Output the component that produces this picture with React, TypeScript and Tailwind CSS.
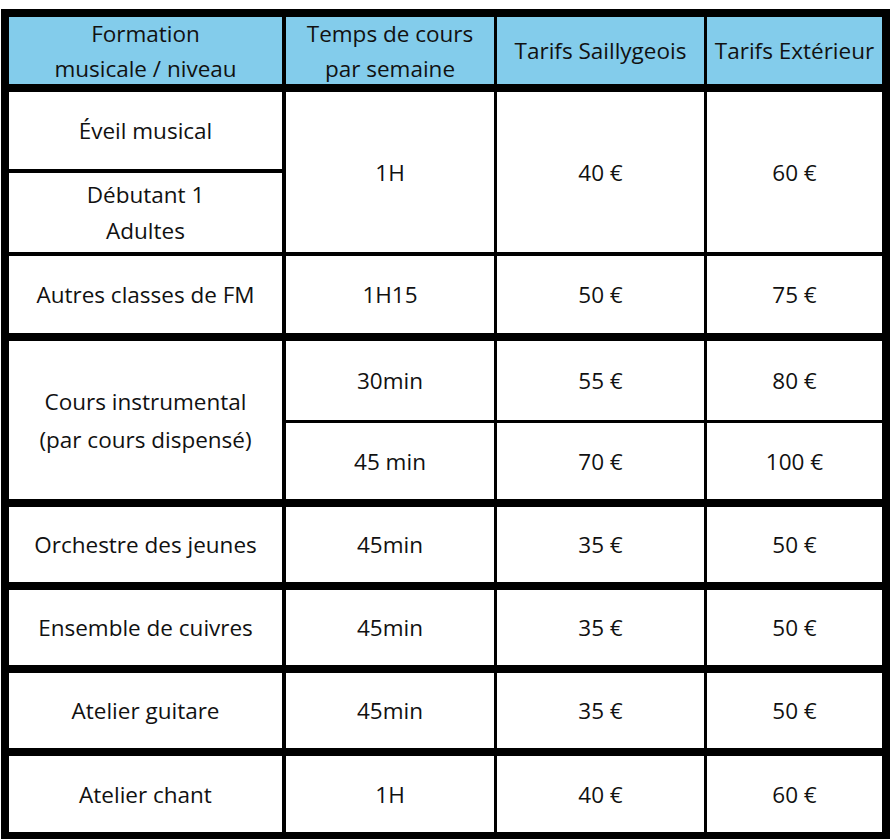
import type { ReactNode } from "react";

interface CellProps {
  children?: ReactNode;
  className?: string;
}

function Cell({ children, className = "" }: CellProps) {
  return (
    <div
      className={`flex flex-col items-center justify-center bg-white pt-px text-center ${className}`}
    >
      {children}
    </div>
  );
}

function Head({ children, className = "" }: CellProps) {
  return (
    <div
      className={`flex flex-col items-center justify-center bg-[#83cceb] text-center leading-[35px] ${className}`}
    >
      {children}
    </div>
  );
}

const groups = [
  { name: "Orchestre des jeunes", time: "45min", local: "35 €", ext: "50 €" },
  { name: "Ensemble de cuivres", time: "45min", local: "35 €", ext: "50 €" },
  { name: "Atelier guitare", time: "45min", local: "35 €", ext: "50 €" },
  { name: "Atelier chant", time: "1H", local: "40 €", ext: "60 €" },
];

export default function App() {
  return (
    <div className="min-h-[840px] bg-white pt-[9px] pl-px font-['Open_Sans',sans-serif] text-[22.5px] text-[#111]">
      <div className="grid w-[889px] grid-cols-[274px_208px_207px_175px] grid-rows-[67px_85px_83px_81px_87px_79px_83px_83px_83px_84px] gap-x-[3px] bg-black p-[8px] pb-[7px]">
        <Head className="mr-px">
          <span>Formation</span>
          <span>musicale / niveau</span>
        </Head>
        <Head>
          <span>Temps de cours</span>
          <span>par semaine</span>
        </Head>
        <Head>Tarifs Saillygeois</Head>
        <Head>Tarifs Extérieur</Head>

        {/* Éveil + Débutant share the same prices */}
        <Cell className="mr-px mt-[8px]">Éveil musical</Cell>
        <Cell className="row-span-2 mt-[8px]">1H</Cell>
        <Cell className="row-span-2 mt-[8px]">40 €</Cell>
        <Cell className="row-span-2 mt-[8px]">60 €</Cell>
        <Cell className="mr-px mt-[4px] leading-[36px]">
          <span>Débutant 1</span>
          <span>Adultes</span>
        </Cell>

        <Cell className="mr-px mt-[4px]">Autres classes de FM</Cell>
        <Cell className="mt-[4px]">1H15</Cell>
        <Cell className="mt-[4px]">50 €</Cell>
        <Cell className="mt-[4px]">75 €</Cell>

        <Cell className="row-span-2 mr-px mt-[8px] leading-[38px]">
          <span>Cours instrumental</span>
          <span>(par cours dispensé)</span>
        </Cell>
        <Cell className="mt-[8px]">30min</Cell>
        <Cell className="mt-[8px]">55 €</Cell>
        <Cell className="mt-[8px]">80 €</Cell>
        <Cell className="mt-[3px]">45 min</Cell>
        <Cell className="mt-[3px]">70 €</Cell>
        <Cell className="mt-[3px]">100 €</Cell>

        {groups.map((g) => (
          <div key={g.name} className="contents">
            <Cell className="mr-px mt-[8px]">{g.name}</Cell>
            <Cell className="mt-[8px]">{g.time}</Cell>
            <Cell className="mt-[8px]">{g.local}</Cell>
            <Cell className="mt-[8px]">{g.ext}</Cell>
          </div>
        ))}
      </div>
    </div>
  );
}
